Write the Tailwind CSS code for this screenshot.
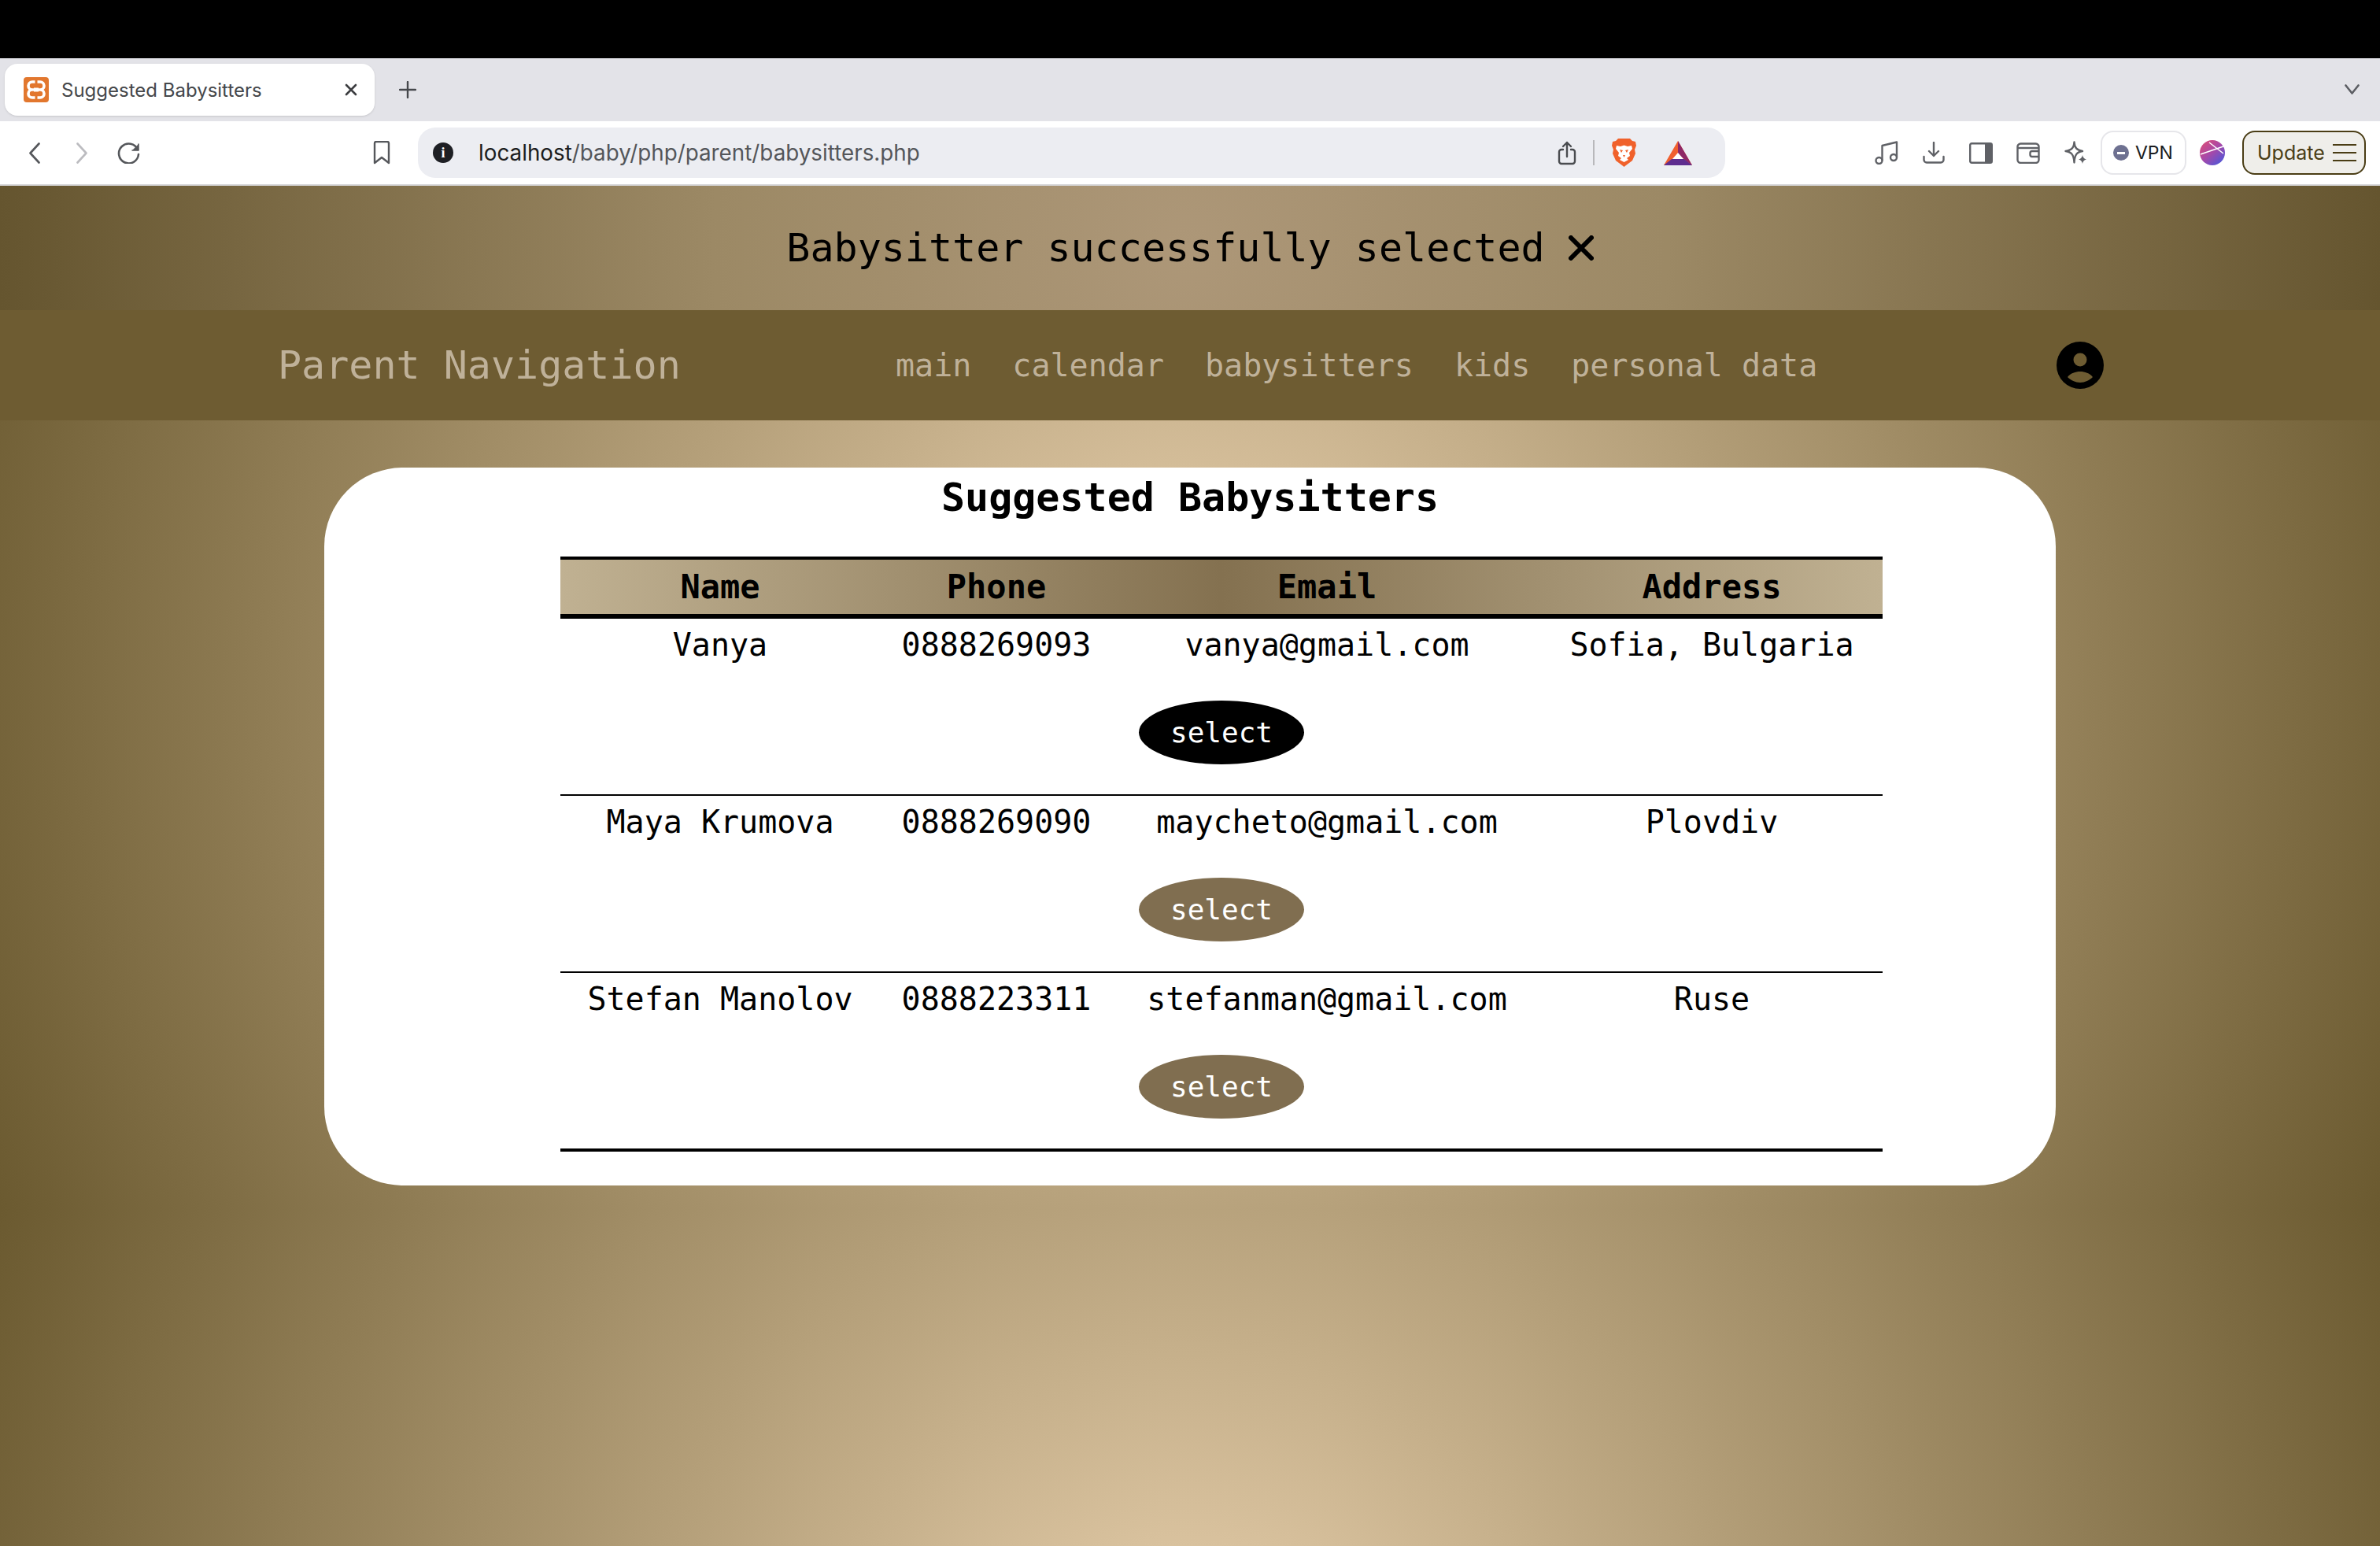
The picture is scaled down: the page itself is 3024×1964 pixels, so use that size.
<!DOCTYPE html>
<html lang="en">

<head>
    <meta charset="UTF-8">
    <meta name="viewport" content="width=device-width, initial-scale=1.0">
    <title>Suggested Babysitters</title>
    <script src="https://cdn.jsdelivr.net/npm/@tailwindcss/browser@4"></script>
</head>

<body class="w-[3024px] h-[1964px] overflow-hidden flex flex-col bg-white font-['Inter',sans-serif]">
    <!-- browser chrome -->
    <div class="h-[74px] shrink-0 bg-black"></div>

    <div class="h-[80px] shrink-0 bg-[#e3e3e8] flex items-center pl-[6px] pr-[26px]">
        <div class="w-[470px] h-[66px] bg-white rounded-[16px] shadow-sm flex items-center pl-[24px] pr-[22px]">
            <svg class="w-[32px] h-[32px] shrink-0" viewBox="0 0 32 32">
                <rect width="32" height="32" rx="4" fill="#e2772e" />
                <path d="M14.500 6H11a5 5 0 0 0 0 10h3.500M14.500 16H11a5 5 0 0 0 0 10h3.500M17.500 6H21a5 5 0 0 1 0 10h-3.500M17.500 16H21a5 5 0 0 1 0 10h-3.500" fill="none" stroke="#fff" stroke-width="3.600" />
                <path d="M13 16h6" stroke="#fff" stroke-width="5" />
            </svg>
            <span class="ml-[16px] mt-[2px] text-[24px] text-[#45474a] whitespace-nowrap">Suggested Babysitters</span>
            <svg class="ml-auto w-[16px] h-[16px]" viewBox="0 0 16 16" fill="none" stroke="#3c3d40" stroke-width="2.6" stroke-linecap="round">
                <path d="M2 2l12 12M14 2L2 14" />
            </svg>
        </div>
        <svg class="ml-[31px] w-[22px] h-[22px]" viewBox="0 0 22 22" fill="none" stroke="#46484c" stroke-width="2.4" stroke-linecap="round">
            <path d="M11 1v20M1 11h20" />
        </svg>
        <svg class="ml-auto w-[19px] h-[13px] -mt-[2px]" viewBox="0 0 19 13" fill="none" stroke="#5c5e63" stroke-width="2.6" stroke-linecap="round" stroke-linejoin="round">
            <path d="M1.5 1.5L9.500 11.500L17.500 1.500" />
        </svg>
    </div>

    <div class="h-[82px] shrink-0 bg-white border-b-2 border-[#d6d6d8] flex items-center">
        <svg class="ml-[37px] w-[14px] h-[27px]" viewBox="0 0 14 27" fill="none" stroke="#55575b" stroke-width="2.600" stroke-linecap="round" stroke-linejoin="round">
            <path d="M12.500 1.500L1.500 13.500L12.500 25.500" />
        </svg>
        <svg class="ml-[46px] w-[14px] h-[27px]" viewBox="0 0 14 27" fill="none" stroke="#bcbcc0" stroke-width="2.600" stroke-linecap="round" stroke-linejoin="round">
            <path d="M1.500 1.500L12.500 13.500L1.500 25.500" />
        </svg>
        <svg class="ml-[37px] w-[31px] h-[28px]" viewBox="0 0 31 28" fill="none" stroke="#55575b" stroke-width="2.600" stroke-linecap="round" stroke-linejoin="round">
            <path d="M27 10A12.500 12.500 0 1 0 28 16" />
            <path d="M28 3v8h-8" fill="#55575b" stroke-width="1.500" />
        </svg>
        <svg class="ml-[295px] w-[22px] h-[30px]" viewBox="0 0 22 30" fill="none" stroke="#55575b" stroke-width="2.400" stroke-linejoin="round">
            <path d="M2 3a2 2 0 0 1 2-2h14a2 2 0 0 1 2 2v25l-9-7-9 7z" />
        </svg>
        <div class="ml-[35px] w-[1661px] h-[64px] rounded-[22px] bg-[#ecedf2] flex items-center pl-[19px] pr-[42px]">
            <div class="w-[26px] h-[26px] rounded-full bg-[#1e1f24] flex items-center justify-center text-white text-[18px] font-bold font-['Liberation_Serif',serif]">i</div>
            <span class="ml-[32px] mt-[1px] text-[27.800px] text-[#54565a] whitespace-nowrap"><span class="text-[#1c1d20]">localhost</span>/baby/php/parent/babysitters.php</span>
            <svg class="ml-auto w-[24px] h-[31px]" viewBox="0 0 24 31" fill="none" stroke="#4a4c50" stroke-width="2.400" stroke-linecap="round" stroke-linejoin="round">
                <path d="M7 11H5a3 3 0 0 0-3 3v12a3 3 0 0 0 3 3h14a3 3 0 0 0 3-3V14a3 3 0 0 0-3-3h-2" />
                <path d="M12 20V2M7 7l5-5 5 5" />
            </svg>
            <div class="ml-[21px] w-[2px] h-[32px] bg-[#b8b8bb]"></div>
            <svg class="ml-[22px] w-[31px] h-[36px]" viewBox="0 0 31 36">
                <path d="M8 0h15l3 3 4 1 1 5-2 5 1 5-4 9-8 6-2.500 2-2.500-2-8-6-4-9 1-5-2-5 1-5 4-1z" fill="#f0612b" />
                <path d="M6 9l5 1 4.500-1.500L20 10l5-1 1 4-4 5 1 4-4 3 2 2-5.500 3L10 27l2-2-4-3 1-4-4-5z" fill="#fff" />
                <path d="M10 14l4 1-2 3zM21 14l-4 1 2 3zM14 21h3l-1.500 3z" fill="#f0612b" />
            </svg>
            <svg class="ml-[35px] w-[36px] h-[31px]" viewBox="0 0 36 31">
                <path d="M18 0L0 31h36z" fill="#f05f2f" />
                <path d="M18 0v17l18 14z" fill="#8e2766" />
                <path d="M0 31l10-8h16l10 8z" fill="#5e2d8f" />
                <path d="M18 15l-7 8h14z" fill="#fff" />
            </svg>
        </div>
        <svg class="ml-[190px] w-[30px] h-[30px]" viewBox="0 0 30 30" fill="none" stroke="#5f6166" stroke-width="2.400" stroke-linejoin="round">
            <circle cx="5.500" cy="25" r="4" />
            <circle cx="24" cy="21" r="4" />
            <path d="M9.500 25V6L28 1.500V21" />
        </svg>
        <svg class="ml-[31px] w-[28px] h-[28px]" viewBox="0 0 28 28" fill="none" stroke="#5f6166" stroke-width="2.400" stroke-linecap="round" stroke-linejoin="round">
            <path d="M14 1v17M8 12l6 6 6-6" />
            <path d="M1.500 19v4a3.500 3.500 0 0 0 3.500 3.500h18a3.500 3.500 0 0 0 3.500-3.500v-4" />
        </svg>
        <svg class="ml-[31px] w-[30px] h-[27px]" viewBox="0 0 30 27">
            <rect x="1.200" y="1.200" width="27.600" height="24.600" rx="2" fill="none" stroke="#5f6166" stroke-width="2.400" />
            <rect x="20" y="1" width="9" height="25" fill="#5f6166" />
        </svg>
        <svg class="ml-[30px] w-[30px] h-[27px]" viewBox="0 0 30 27" fill="none" stroke="#5f6166" stroke-width="2.400" stroke-linejoin="round">
            <path d="M1.500 6a4 4 0 0 1 4-4.500h19a4 4 0 0 1 4 4.500v16a4 4 0 0 1-4 4h-19a4 4 0 0 1-4-4z" />
            <path d="M2 7h26" />
            <path d="M28 11h-8a2.500 2.500 0 0 0-2.500 2.500v2a2.500 2.500 0 0 0 2.500 2.500h8" />
        </svg>
        <svg class="ml-[30px] w-[30px] h-[30px]" viewBox="0 0 30 30">
            <path d="M13.500 1.500c.5 7.500 3.500 10.500 10.500 11.500-7 1-10 4.500-10.500 14.500-.5-10-3.500-13.500-11-14.500 7.500-1 10.500-4 11-11.500z" fill="none" stroke="#5f6166" stroke-width="2.400" stroke-linejoin="round" />
            <path d="M24 18c.6 3.200 1.800 4.400 5 5.500-3.200 1.100-4.400 2.300-5 5.500-.6-3.200-1.800-4.400-5-5.500 3.200-1.100 4.400-2.300 5-5.500z" fill="#5f6166" />
        </svg>
        <div class="ml-[17px] w-[109px] h-[56px] rounded-[16px] border-2 border-[#e6e6ea] bg-white flex items-center pl-[14px]">
            <div class="w-[20px] h-[20px] rounded-full bg-[#6e7191] flex items-center justify-center">
                <div class="w-[10px] h-[3px] bg-white"></div>
            </div>
            <span class="ml-[8px] text-[23px] text-[#1b1c20]">VPN</span>
        </div>
        <svg class="ml-[17px] w-[32px] h-[32px]" viewBox="0 0 32 32">
            <defs>
                <linearGradient id="rewards" x1="0.100" y1="0.100" x2="0.800" y2="0.900">
                    <stop offset="0" stop-color="#d64d7c" />
                    <stop offset="0.500" stop-color="#a848a8" />
                    <stop offset="1" stop-color="#5a55d2" />
                </linearGradient>
            </defs>
            <circle cx="16" cy="16" r="16" fill="url(#rewards)" />
            <path d="M1 18L30 8M12 3l18 14" stroke="#fff" stroke-width="1.500" fill="none" />
        </svg>
        <div class="ml-[22px] w-[157px] h-[56px] rounded-[16px] border-2 border-[#4a3d15] bg-[#efeeea] flex items-center pl-[17px]">
            <span class="w-[88px] mt-[1px] text-[25px] text-[#4a3d15]">Update</span>
            <svg class="ml-[8px] w-[30px] h-[24px]" viewBox="0 0 30 24" fill="none" stroke="#4a3d15" stroke-width="2.200">
                <path d="M0 2h30M0 12h30M0 22h30" />
            </svg>
        </div>
    </div>

    <!-- page -->
    <div class="flex-1 font-['DejaVu_Sans_Mono',monospace] bg-[radial-gradient(circle,#ead2af,#6b5a30)] bg-[length:3024px_1300px] bg-repeat">
        <div class="h-[158px] bg-[radial-gradient(circle,#ad9778,#9c8965_40%,#65552f)] flex items-center justify-center gap-[30px] text-black text-[50px]">
            <span>Babysitter successfully selected</span>
            <svg class="w-[32px] h-[32px]" viewBox="0 0 32 32" fill="none" stroke="#000" stroke-width="6" stroke-linecap="round">
                <path d="M3 3l26 26M29 3L3 29" />
            </svg>
        </div>

        <nav class="h-[140px] bg-[#6e5c32] flex items-center text-[#bfb199] pl-[353px]">
            <span class="w-[785px] text-[50px]">Parent Navigation</span>
            <div class="flex gap-[52px] text-[40px]">
                <a href="#">main</a>
                <a href="#">calendar</a>
                <a href="#">babysitters</a>
                <a href="#">kids</a>
                <a href="#">personal data</a>
            </div>
            <svg class="ml-[304px] w-[60px] h-[60px]" viewBox="0 0 60 60">
                <circle cx="30" cy="30" r="30" fill="#000" />
                <circle cx="30" cy="23" r="8.500" fill="#6e5c32" />
                <path d="M14 45c4-5 10-7 16-7s12 2 16 7c-4 4-10 7-16 7s-12-3-16-7z" fill="#6e5c32" />
            </svg>
        </nav>

        <main class="w-[2200px] h-[912px] mx-auto mt-[60px] bg-white rounded-[100px] text-black">
            <h1 class="pt-[9px] text-center text-[50px] font-bold leading-[58px]">Suggested Babysitters</h1>

            <div class="w-[1680px] ml-[300px] mt-[46px] border-t-4 border-b-4 border-black">
                <div class="grid grid-cols-[406px_296px_544px_434px] h-[75px] border-b-[6px] border-black text-center text-[42px] font-bold bg-[linear-gradient(to_right,#c0b192,#847150,#c0b192)]">
                    <div class="self-center">Name</div>
                    <div class="self-center">Phone</div>
                    <div class="self-center">Email</div>
                    <div class="self-center">Address</div>
                </div>

                <div class="border-b-2 border-black h-[225px] pt-[10px]">
                    <div class="grid grid-cols-[406px_296px_544px_434px] text-center text-[40px] leading-[47px]">
                        <div>Vanya</div>
                        <div>0888269093</div>
                        <div>vanya@gmail.com</div>
                        <div>Sofia, Bulgaria</div>
                    </div>
                    <div class="flex justify-center mt-[47px]">
                        <button class="w-[210px] h-[81px] rounded-[50%] bg-black text-white text-[36px]">select</button>
                    </div>
                </div>

                <div class="border-b-2 border-black h-[225px] pt-[10px]">
                    <div class="grid grid-cols-[406px_296px_544px_434px] text-center text-[40px] leading-[47px]">
                        <div>Maya Krumova</div>
                        <div>0888269090</div>
                        <div>maycheto@gmail.com</div>
                        <div>Plovdiv</div>
                    </div>
                    <div class="flex justify-center mt-[47px]">
                        <button class="w-[210px] h-[81px] rounded-[50%] bg-[#806e50] text-white text-[36px]">select</button>
                    </div>
                </div>

                <div class="h-[223px] pt-[10px]">
                    <div class="grid grid-cols-[406px_296px_544px_434px] text-center text-[40px] leading-[47px]">
                        <div>Stefan Manolov</div>
                        <div>0888223311</div>
                        <div>stefanman@gmail.com</div>
                        <div>Ruse</div>
                    </div>
                    <div class="flex justify-center mt-[47px]">
                        <button class="w-[210px] h-[81px] rounded-[50%] bg-[#806e50] text-white text-[36px]">select</button>
                    </div>
                </div>
            </div>
        </main>
    </div>
</body>

</html>
